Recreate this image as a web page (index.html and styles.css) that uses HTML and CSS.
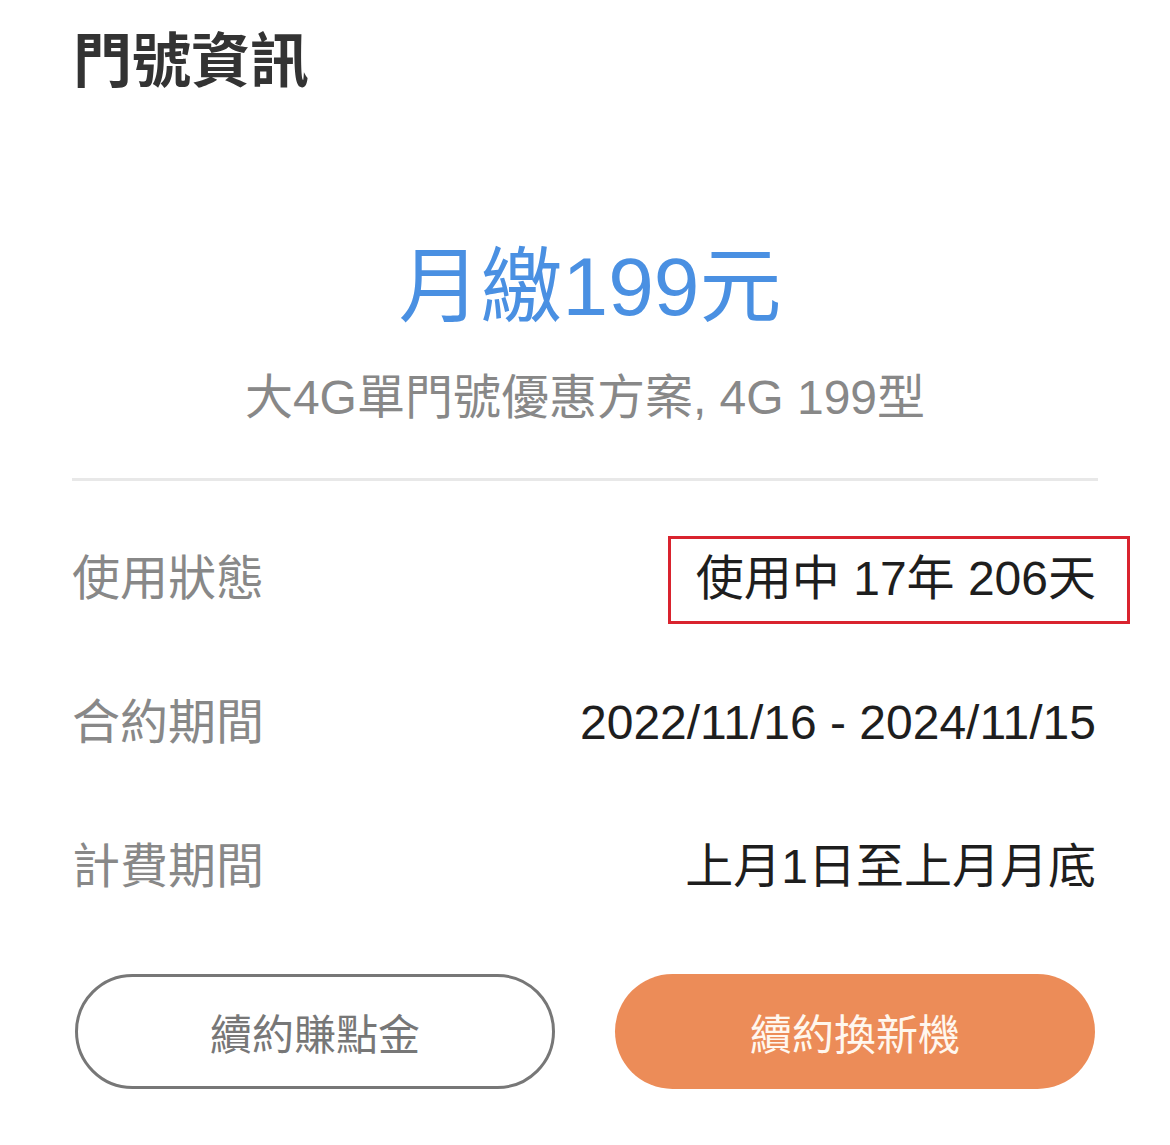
FILE: index.html
```html
<!DOCTYPE html>
<html lang="zh-Hant">
<head>
<meta charset="utf-8">
<title>門號資訊</title>
<link rel="stylesheet" href="styles.css">
</head>
<body>
<main class="page">
  <h1 class="title">門號資訊</h1>
  <section class="hero">
    <div class="price">月繳199元</div>
    <div class="plan">大4G單門號優惠方案, 4G 199型</div>
  </section>
  <hr class="divider">
  <section class="info">
    <div class="row">
      <span class="label">使用狀態</span>
      <span class="value highlight">使用中 17年 206天</span>
    </div>
    <div class="row">
      <span class="label">合約期間</span>
      <span class="value">2022/11/16 - 2024/11/15</span>
    </div>
    <div class="row">
      <span class="label">計費期間</span>
      <span class="value">上月1日至上月月底</span>
    </div>
  </section>
  <div class="actions">
    <button class="btn btn-outline">續約賺點金</button>
    <button class="btn btn-fill">續約換新機</button>
  </div>
</main>
</body>
</html>
```
FILE: styles.css
```css
html, body {
  margin: 0;
  padding: 0;
  background: #ffffff;
}
body {
  font-family: "Liberation Sans", "Noto Sans CJK TC", sans-serif;
  color: #222;
}
.page {
  width: 1026px;
  padding: 22px 72px 0;
}
.title {
  margin: 0 0 0 1px;
  font-family: "Noto Sans CJK TC", sans-serif;
  font-size: 59px;
  font-weight: 700;
  line-height: 70px;
  color: #333;
}
.hero {
  display: flex;
  flex-direction: column;
  align-items: center;
  margin-top: 147px;
}
.price {
  font-size: 82px;
  line-height: 96px;
  color: #4a90e2;
  margin-left: 10px;
}
.plan {
  margin-top: 35px;
  font-size: 48px;
  line-height: 56px;
  color: #888;
}
.divider {
  margin: 52px 0 0;
  border: 0;
  height: 3px;
  background: #e8e8e8;
}
.info {
  padding-top: 26px;
}
.row {
  height: 144px;
  display: flex;
  align-items: center;
  justify-content: space-between;
}
.label {
  font-size: 48px;
  line-height: 56px;
  color: #888;
}
.value {
  font-size: 48px;
  line-height: 56px;
  color: #1e1e1e;
  margin-right: 2px;
}
.highlight {
  position: relative;
}
.highlight::after {
  content: "";
  position: absolute;
  left: -28px;
  right: -34px;
  top: -15px;
  bottom: -17px;
  border: 3px solid #d9232e;
}
.actions {
  display: grid;
  grid-template-columns: 1fr 1fr;
  gap: 60px;
  margin: 35px 3px 0;
}
.btn {
  height: 115px;
  border-radius: 58px;
  font-family: "Noto Sans CJK TC", sans-serif;
  font-size: 42px;
  padding: 0;
}
.btn-outline {
  background: #fff;
  border: 3px solid #777;
  color: #777;
}
.btn-fill {
  background: #ec8c58;
  border: 0;
  color: #fff7ee;
}
```
